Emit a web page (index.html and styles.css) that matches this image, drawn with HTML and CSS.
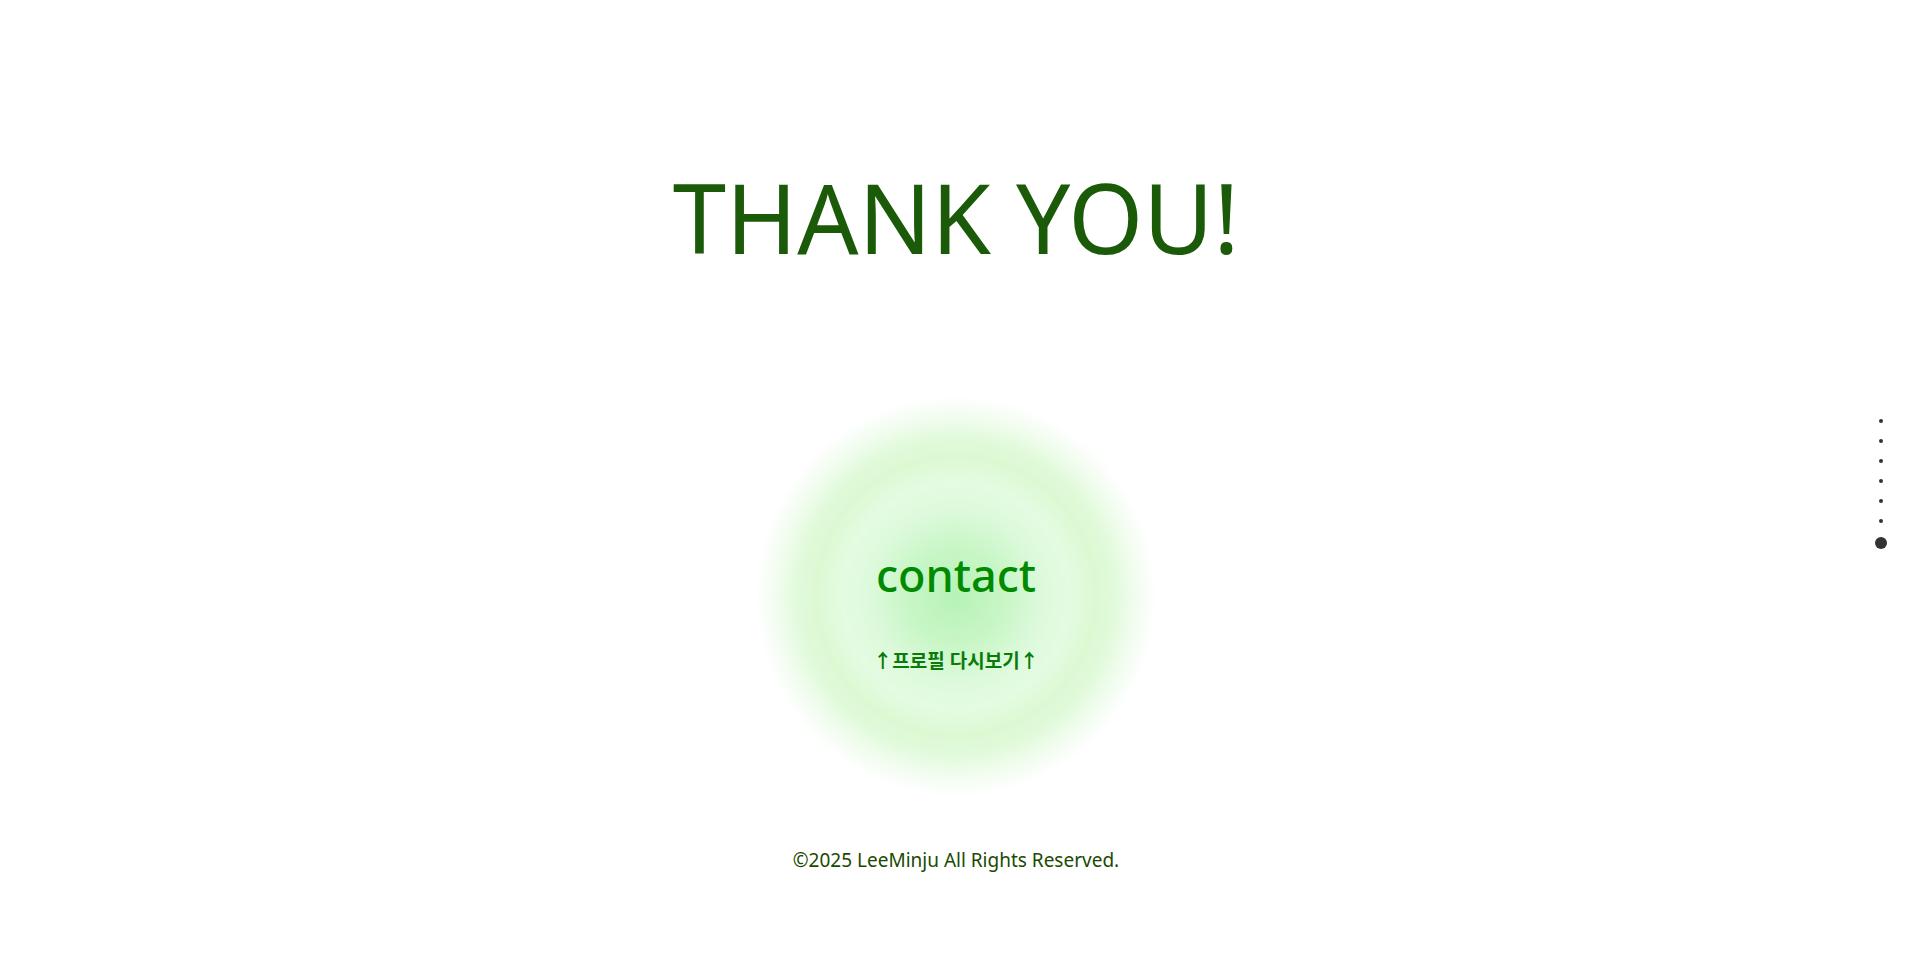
FILE: index.html
```html
<!DOCTYPE html>
<html lang="ko">
<head>
<meta charset="utf-8">
<title>Thank you</title>
<link rel="stylesheet" href="styles.css">
</head>
<body>
<main class="page">
  <h1 class="title">THANK YOU!</h1>
  <div class="orb">
    <a class="contact" href="#">contact</a>
    <a class="back" href="#">↑프로필 다시보기↑</a>
  </div>
  <footer class="footer">©2025 LeeMinju All Rights Reserved.</footer>
</main>
<nav class="dots">
  <span class="dot"></span>
  <span class="dot"></span>
  <span class="dot"></span>
  <span class="dot"></span>
  <span class="dot"></span>
  <span class="dot"></span>
  <span class="dot active"></span>
</nav>
</body>
</html>
```
FILE: styles.css
```css
html, body {
  margin: 0;
  padding: 0;
  background: #ffffff;
}
body {
  font-family: "Noto Sans", "Noto Sans CJK KR", sans-serif;
  overflow: hidden;
}
.page {
  height: 962px;
  display: flex;
  flex-direction: column;
  align-items: center;
  box-sizing: border-box;
  padding-top: 162px;
}
.title {
  margin: 0;
  font-size: 96px;
  line-height: 110px;
  font-weight: 400;
  color: #1b5a08;
}
.orb {
  margin-top: 125px;
  width: 398px;
  height: 398px;
  box-sizing: border-box;
  padding-top: 150px;
  border-radius: 50%;
  display: flex;
  flex-direction: column;
  align-items: center;
  gap: 46px;
  background: radial-gradient(circle closest-side,
    #b6f3b6 0%,
    #c8f6c6 24%,
    #ddfadc 44%,
    #e4fce2 57%,
    rgba(216, 248, 206, 0.9) 70%,
    rgba(218, 249, 210, 0.8) 80%,
    rgba(230, 251, 226, 0.6) 89%,
    rgba(240, 252, 238, 0.4) 96%,
    rgba(248, 254, 247, 0.15) 100%);
}
.contact {
  font-size: 45px;
  line-height: 56px;
  font-weight: 500;
  color: #008a00;
  text-decoration: none;
}
.back {
  font-size: 19px;
  font-weight: 700;
  line-height: 24px;
  color: #0a7a0a;
  text-decoration: none;
}
.footer {
  margin-top: 53px;
  font-size: 19px;
  line-height: 24px;
  color: #1a4a00;
}
.dots {
  position: fixed;
  right: 25px;
  top: 419px;
  display: flex;
  flex-direction: column;
  align-items: center;
  gap: 16px;
}
.dot {
  width: 4px;
  height: 4px;
  border-radius: 50%;
  background: #333333;
}
.dot.active {
  width: 12px;
  height: 12px;
  margin-top: -2px;
}
```
